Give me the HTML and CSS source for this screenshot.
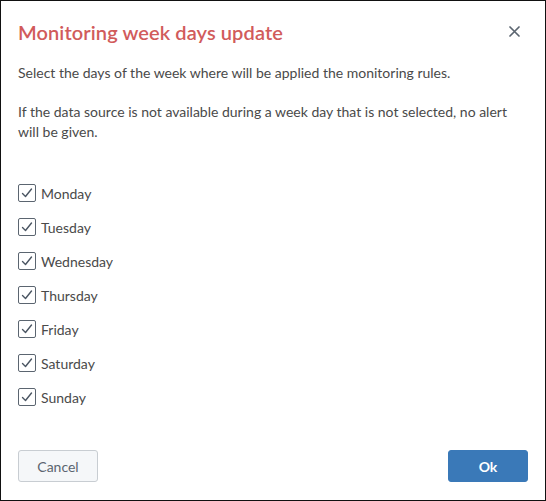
FILE: index.html
```html
<!DOCTYPE html>
<html>
<head>
<meta charset="utf-8">
<link rel="stylesheet" href="styles.css">
</head>
<body>
<div class="modal">
  <div class="header">
    <h1 class="title">Monitoring week days update</h1>
    <button class="close" aria-label="Close">
      <svg width="11" height="11" viewBox="0 0 11 11"><path d="M1 1L10 10M10 1L1 10" stroke="#5b6570" stroke-width="1.7" stroke-linecap="round"/></svg>
    </button>
  </div>
  <div class="body">
    <p class="text">Select the days of the week where will be applied the monitoring rules.</p>
    <p class="text">If the data source is not available during a week day that is not selected, no alert will be given.</p>
    <ul class="days">
      <li class="day"><span class="box"><svg width="14" height="14" viewBox="0 0 14 14"><path d="M2.5 7.5L5.5 10.5L11.5 3" fill="none" stroke="#4a5562" stroke-width="1.4" stroke-linecap="round" stroke-linejoin="round"/></svg></span>Monday</li>
      <li class="day"><span class="box"><svg width="14" height="14" viewBox="0 0 14 14"><path d="M2.5 7.5L5.5 10.5L11.5 3" fill="none" stroke="#4a5562" stroke-width="1.4" stroke-linecap="round" stroke-linejoin="round"/></svg></span>Tuesday</li>
      <li class="day"><span class="box"><svg width="14" height="14" viewBox="0 0 14 14"><path d="M2.5 7.5L5.5 10.5L11.5 3" fill="none" stroke="#4a5562" stroke-width="1.4" stroke-linecap="round" stroke-linejoin="round"/></svg></span>Wednesday</li>
      <li class="day"><span class="box"><svg width="14" height="14" viewBox="0 0 14 14"><path d="M2.5 7.5L5.5 10.5L11.5 3" fill="none" stroke="#4a5562" stroke-width="1.4" stroke-linecap="round" stroke-linejoin="round"/></svg></span>Thursday</li>
      <li class="day"><span class="box"><svg width="14" height="14" viewBox="0 0 14 14"><path d="M2.5 7.5L5.5 10.5L11.5 3" fill="none" stroke="#4a5562" stroke-width="1.4" stroke-linecap="round" stroke-linejoin="round"/></svg></span>Friday</li>
      <li class="day"><span class="box"><svg width="14" height="14" viewBox="0 0 14 14"><path d="M2.5 7.5L5.5 10.5L11.5 3" fill="none" stroke="#4a5562" stroke-width="1.4" stroke-linecap="round" stroke-linejoin="round"/></svg></span>Saturday</li>
      <li class="day"><span class="box"><svg width="14" height="14" viewBox="0 0 14 14"><path d="M2.5 7.5L5.5 10.5L11.5 3" fill="none" stroke="#4a5562" stroke-width="1.4" stroke-linecap="round" stroke-linejoin="round"/></svg></span>Sunday</li>
    </ul>
  </div>
  <div class="footer">
    <button class="btn cancel">Cancel</button>
    <button class="btn ok">Ok</button>
  </div>
</div>
</body>
</html>
```
FILE: styles.css
```css
* { box-sizing: border-box; }
html, body { margin: 0; padding: 0; }
body {
  width: 546px;
  height: 501px;
  font-family: Lato, "Open Sans", "Liberation Sans", sans-serif;
  color: #4a4a4a;
  background: #fff;
}
.modal {
  width: 546px;
  height: 501px;
  border: 1px solid #111;
  display: flex;
  flex-direction: column;
}
.header {
  display: flex;
  align-items: center;
  justify-content: space-between;
  padding: 16px 25px 0 17px;
  height: 45px;
}
.title {
  margin: 0;
  font-size: 20px;
  font-weight: 600;
  color: #d15b5b;
  letter-spacing: 0.1px;
}
.close {
  border: 0;
  background: none;
  padding: 0;
  width: 11px;
  height: 11px;
  display: flex;
  cursor: pointer;
}
.body {
  padding: 17px 17px 0 17px;
  flex: 1;
}
.text {
  margin: 0 0 19px 0;
  font-size: 14px;
  line-height: 20px;
  color: #4a4a4a;
}
.days {
  list-style: none;
  margin: 0;
  padding: 23px 0 0 0;
  display: flex;
  flex-direction: column;
  gap: 16px;
}
.day {
  display: flex;
  align-items: center;
  gap: 5px;
  font-size: 14px;
  height: 18px;
  color: #4a4a4a;
}
.box {
  width: 18px;
  height: 18px;
  border: 1px solid #5b6570;
  border-radius: 2px;
  display: flex;
  align-items: center;
  justify-content: center;
}
.footer {
  display: flex;
  justify-content: space-between;
  padding: 0 17px 18px 17px;
}
.btn {
  width: 80px;
  height: 32px;
  border-radius: 3px;
  font-family: inherit;
  font-size: 14px;
  cursor: pointer;
}
.cancel {
  background: #f5f7f9;
  border: 1px solid #c8cdd2;
  color: #5b6570;
}
.ok {
  background: #3a79b8;
  border: 1px solid #3a79b8;
  color: #fff;
  font-weight: 700;
}
```
